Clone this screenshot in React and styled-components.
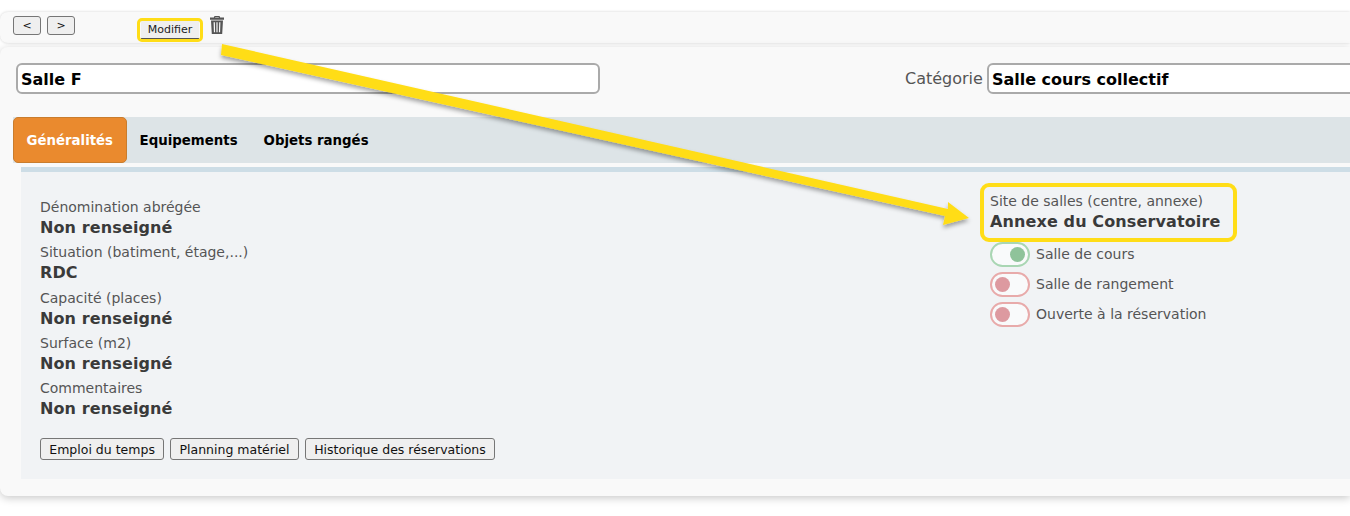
import styled, { createGlobalStyle } from "styled-components";

const GlobalStyle = createGlobalStyle`
    html, body {
        margin: 0;
        padding: 0;
        background-color: #fff;
    }
    body {
        font-family: "DejaVu Sans", Verdana, sans-serif;
        color: #444;
    }
`;

const Page = styled.div`
    position: relative;
    width: 1350px;
    height: 516px;
    overflow: hidden;
    padding-top: 12px;
    box-sizing: border-box;
`;

const Toolbar = styled.div`
    height: 31px;
    background-color: #f9f9f9;
    border-radius: 8px 0 0 8px;
    box-shadow: 0 0 3px rgba(0, 0, 0, 0.18);
    display: flex;
    align-items: flex-start;
    padding: 4px 0 0 13px;
    box-sizing: border-box;
`;

const NavButton = styled.button`
    width: 28px;
    height: 19px;
    margin-right: 6px;
    padding: 0;
    font: 11px "DejaVu Sans", sans-serif;
    color: #111;
    background-color: #efefef;
    border: 1px solid #767676;
    border-radius: 3px;
`;

const Highlighted = styled.div`
    position: relative;
    &::after {
        content: "";
        position: absolute;
        inset: ${(p) => p.$inset};
        border: ${(p) => p.$stroke} solid #ffdd17;
        border-radius: ${(p) => p.$radius};
        pointer-events: none;
    }
`;

const EditSlot = styled(Highlighted)`
    margin: 4px 0 0 60px;
`;

const EditButton = styled.button`
    display: block;
    width: 58px;
    height: 19px;
    padding: 0;
    font: 11px "DejaVu Sans", sans-serif;
    color: #222;
    background-color: #efefef;
    border: 0;
    border-bottom: 1px solid #555;
`;

const TrashIcon = styled.svg`
    width: 16px;
    height: 18px;
    margin-left: 10px;
    color: #555;
`;

const Panel = styled.div`
    height: 449px;
    margin-top: 4px;
    background-color: #f9f9f9;
    border-radius: 8px 0 0 8px;
    box-shadow: 0 2px 8px rgba(0, 0, 0, 0.22);
    padding-top: 16px;
    box-sizing: border-box;
`;

const TitleRow = styled.div`
    display: flex;
    align-items: center;
    padding-left: 16px;
    height: 31px;
`;

const TextField = styled.input`
    box-sizing: border-box;
    height: 31px;
    width: ${(p) => p.$width};
    flex-shrink: 0;
    padding: 1px 3px 0;
    font: bold 16px "DejaVu Sans", sans-serif;
    color: #000;
    background-color: #fff;
    border: 2px solid #aaa;
    border-radius: 6px;
    outline: none;
`;

const CategoryLabel = styled.label`
    margin-left: 305px;
    margin-right: 4px;
    font-size: 16px;
    color: #555;
`;

const TabBar = styled.div`
    display: flex;
    align-items: stretch;
    height: 46px;
    margin: 23px 0 0 13px;
    background-color: #dde4e7;
`;

const Tab = styled.div`
    display: flex;
    align-items: center;
    box-sizing: border-box;
    font-size: 13.33px;
    font-weight: bold;
    color: ${(p) => (p.$active ? "#fff" : "#000")};
    padding: 0 ${(p) => (p.$active ? "12.5px" : "13px")};
    background-color: ${(p) => (p.$active ? "#ea8a2e" : "transparent")};
    border: ${(p) => (p.$active ? "1px solid #c97d2e" : "0")};
    border-radius: 5px;
`;

const Content = styled.div`
    height: 312px;
    margin: 4px 0 0 21px;
    box-sizing: border-box;
    background-color: #f1f3f5;
    border-top: 5px solid #cddde6;
    display: flex;
`;

const LeftColumn = styled.div`
    width: 969px;
    padding: 27px 0 0 19px;
    box-sizing: border-box;
`;

const Field = styled.div`
    height: 45.25px;
`;

const FieldLabel = styled.div`
    font-size: 14px;
    line-height: 17px;
    color: #555;
`;

const FieldValue = styled.div`
    font-size: 16px;
    font-weight: bold;
    line-height: 24px;
    letter-spacing: 0.12px;
    color: #3a3a3a;
`;

const Actions = styled.div`
    display: flex;
    gap: 6px;
    margin-top: 13px;
`;

const ActionButton = styled.button`
    height: 22px;
    padding: 0 8.3px;
    font: 12.5px "DejaVu Sans", sans-serif;
    color: #111;
    background-color: #efefef;
    border: 1px solid #767676;
    border-radius: 3px;
`;

const RightColumn = styled.div`
    padding-top: 21px;
`;

const SiteBlock = styled(Highlighted)`
    height: 42px;
    margin-bottom: 4px;
`;

const ToggleRow = styled.div`
    display: flex;
    align-items: center;
    gap: 6px;
    height: 30px;
    font-size: 14px;
    color: #555;
`;

const Toggle = styled.span`
    box-sizing: border-box;
    display: flex;
    align-items: center;
    justify-content: ${(p) => (p.$on ? "flex-end" : "flex-start")};
    width: 40px;
    height: 25px;
    padding: 0 3px;
    background-color: #f9fafb;
    border: 2px solid ${(p) => (p.$on ? "#a9d6b3" : "#e8aaaa")};
    border-radius: 13px;
`;

const Knob = styled.span`
    width: 15px;
    height: 15px;
    border-radius: 50%;
    background-color: ${(p) => (p.$on ? "#8fc39a" : "#dd9aa0")};
`;

const Arrow = styled.svg`
    position: absolute;
    left: 0;
    top: 0;
    pointer-events: none;
`;

const fields = [
    ["Dénomination abrégée", "Non renseigné"],
    ["Situation (batiment, étage,...)", "RDC"],
    ["Capacité (places)", "Non renseigné"],
    ["Surface (m2)", "Non renseigné"],
    ["Commentaires", "Non renseigné"],
];

const toggles = [
    ["Salle de cours", true],
    ["Salle de rangement", false],
    ["Ouverte à la réservation", false],
];

export default function App() {
    return (
        <Page>
            <GlobalStyle />
            <Toolbar>
                <NavButton>&lt;</NavButton>
                <NavButton>&gt;</NavButton>
                <EditSlot $inset="-2px -4px -3px -4px" $radius="5px" $stroke="3px">
                    <EditButton>Modifier</EditButton>
                </EditSlot>
                <TrashIcon viewBox="0 0 16 18">
                    <path fill="currentColor" d="M5.5 0h5l.7 1.6H15v2.2H1V1.6h3.8zM6.3 1.1l-.2.5h3.8l-.2-.5zM2 4.6h12L13.2 18H2.8zM4.6 6.2l.3 10h1.2l-.2-10zM7.4 6.2v10h1.2v-10zM10.2 6.2l-.3 10h1.2l.3-10z" fillRule="evenodd" />
                </TrashIcon>
            </Toolbar>
            <Panel>
                <TitleRow>
                    <TextField $width="584px" value="Salle F" readOnly />
                    <CategoryLabel>Catégorie</CategoryLabel>
                    <TextField $width="420px" value="Salle cours collectif" readOnly />
                </TitleRow>
                <TabBar>
                    <Tab $active>Généralités</Tab>
                    <Tab>Equipements</Tab>
                    <Tab>Objets rangés</Tab>
                </TabBar>
                <Content>
                    <LeftColumn>
                        {fields.map(([label, value]) => (
                            <Field key={label}>
                                <FieldLabel>{label}</FieldLabel>
                                <FieldValue>{value}</FieldValue>
                            </Field>
                        ))}
                        <Actions>
                            <ActionButton>Emploi du temps</ActionButton>
                            <ActionButton>Planning matériel</ActionButton>
                            <ActionButton>Historique des réservations</ActionButton>
                        </Actions>
                    </LeftColumn>
                    <RightColumn>
                        <SiteBlock $inset="-10px -17px -7px -10px" $radius="9px" $stroke="4px">
                            <FieldLabel>Site de salles (centre, annexe)</FieldLabel>
                            <FieldValue>Annexe du Conservatoire</FieldValue>
                        </SiteBlock>
                        {toggles.map(([label, on]) => (
                            <ToggleRow key={label}>
                                <Toggle $on={on}>
                                    <Knob $on={on} />
                                </Toggle>
                                {label}
                            </ToggleRow>
                        ))}
                    </RightColumn>
                </Content>
            </Panel>
            <Arrow width="1350" height="516" viewBox="0 0 1350 516">
                <defs>
                    <filter id="arrowShadow" x="-5%" y="-20%" width="110%" height="140%">
                        <feDropShadow dx="0" dy="3" stdDeviation="2" floodColor="#000" floodOpacity="0.35" />
                    </filter>
                </defs>
                <polygon
                    fill="#ffdd17"
                    filter="url(#arrowShadow)"
                    points="222,44 948,209 948,202 969,218 943,225 945,216 221,55"
                />
            </Arrow>
        </Page>
    );
}
